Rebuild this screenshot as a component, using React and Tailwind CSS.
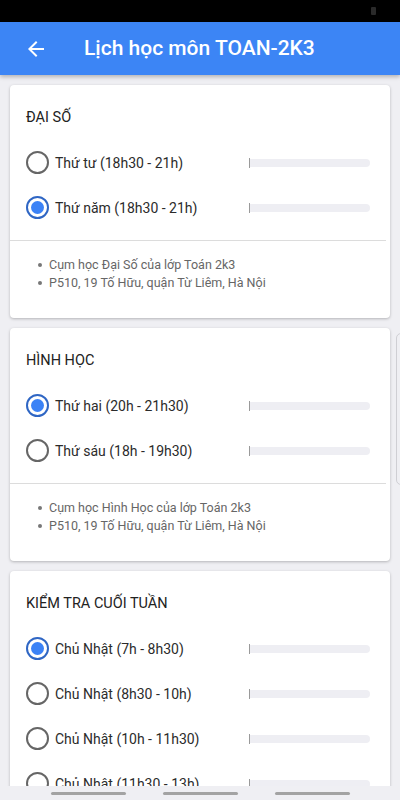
import React from "react";

const Radio = ({ checked }) =>
  checked ? (
    <div className="w-[23px] h-[23px] rounded-full border-[2px] border-[#2f66c4] flex items-center justify-center shrink-0">
      <div className="w-[13px] h-[13px] rounded-full bg-[#3b82f6]" />
    </div>
  ) : (
    <div className="w-[23px] h-[23px] rounded-full border-[2px] border-[#666666] shrink-0" />
  );

const Row = ({ label, checked }) => (
  <div className="h-[45px] flex items-center">
    <Radio checked={checked} />
    <span className="ml-[6px] text-[14px] text-[#2b2b2b] flex-1 leading-5">{label}</span>
    <div className="w-[121px] mr-[20px] flex items-center">
      <div className="w-px h-[10px] bg-[#9a9a9a]" />
      <div className="flex-1 h-[8px] rounded-r-full bg-[#eeeef3]" />
    </div>
  </div>
);

const Card = ({ title, rows, notes }) => (
  <div className="mx-[10px] bg-white rounded-[4px] shadow-[0_1px_3px_rgba(0,0,0,0.25)] pt-[23px]">
    <div className="pl-4 text-[14.5px] leading-5 text-[#222]">{title}</div>
    <div className="pl-4 mt-[12px]">
      {rows.map((r, i) => (
        <Row key={i} label={r[0]} checked={r[1]} />
      ))}
    </div>
    {notes && (
      <>
        <div className="mt-[10px] mr-[4px] h-px bg-[#dcdcdc]" />
        <div className="pt-[15px] pb-[26px] pl-[28px]">
          {notes.map((n, i) => (
            <div key={i} className="flex items-center h-[18px] text-[12.5px] text-[#666]">
              <span className="w-[4px] h-[4px] rounded-full bg-[#777] mr-[7px]" />
              {n}
            </div>
          ))}
        </div>
      </>
    )}
  </div>
);

export default function App() {
  return (
    <div
      className="relative w-[400px] h-[800px] overflow-hidden bg-[#efeff3]"
      style={{ fontFamily: "Roboto, 'Noto Sans', sans-serif" }}
    >
      <div className="h-[22px] bg-black flex justify-end items-center pr-[24px]">
        <div className="w-[5px] h-[8px] rounded-[1px] bg-[#2a2a2a]" />
      </div>
      <div className="relative z-10 h-[53px] bg-[#3c85f5] flex items-center shadow-[0_2px_4px_rgba(0,0,0,0.25)]">
        <svg width="24" height="24" viewBox="0 0 24 24" className="ml-[24px]" fill="white">
          <path d="M20 11H7.83l5.59-5.59L12 4l-8 8 8 8 1.41-1.41L7.83 13H20v-2z" />
        </svg>
        <span className="ml-[36px] text-white text-[21px] font-medium">Lịch học môn TOAN-2K3</span>
      </div>

      <div className="pt-[10px] flex flex-col gap-[10px]">
        <Card
          title="ĐẠI SỐ"
          rows={[
            ["Thứ tư (18h30 - 21h)", false],
            ["Thứ năm (18h30 - 21h)", true],
          ]}
          notes={["Cụm học Đại Số của lớp Toán 2k3", "P510, 19 Tố Hữu, quận Từ Liêm, Hà Nội"]}
        />
        <Card
          title="HÌNH HỌC"
          rows={[
            ["Thứ hai (20h - 21h30)", true],
            ["Thứ sáu (18h - 19h30)", false],
          ]}
          notes={["Cụm học Hình Học của lớp Toán 2k3", "P510, 19 Tố Hữu, quận Từ Liêm, Hà Nội"]}
        />
        <Card
          title="KIỂM TRA CUỐI TUẦN"
          rows={[
            ["Chủ Nhật (7h - 8h30)", true],
            ["Chủ Nhật (8h30 - 10h)", false],
            ["Chủ Nhật (10h - 11h30)", false],
            ["Chủ Nhật (11h30 - 13h)", false],
          ]}
        />
      </div>

      <div className="absolute right-[-6px] top-[333px] w-[10px] h-[152px] rounded-[5px] border border-[#cfcfd4]" />

      <div className="absolute left-0 right-0 bottom-0 h-[14px] bg-[#efeff3] flex justify-center items-center gap-[37px]">
        <div className="w-[75px] h-[3px] rounded-full bg-[#a3a3a3]" />
        <div className="w-[75px] h-[3px] rounded-full bg-[#a3a3a3]" />
        <div className="w-[75px] h-[3px] rounded-full bg-[#a3a3a3]" />
      </div>
    </div>
  );
}
